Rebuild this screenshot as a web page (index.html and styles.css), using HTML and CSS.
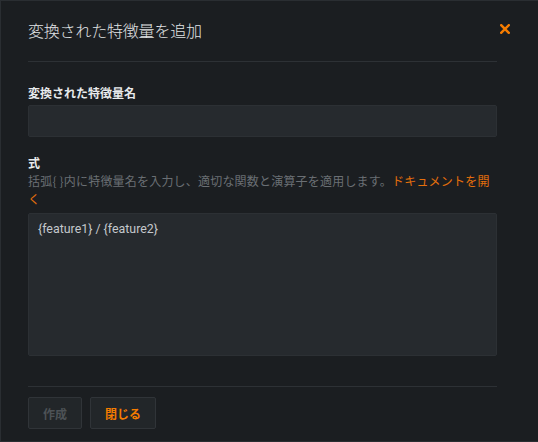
FILE: index.html
```html
<!DOCTYPE html>
<html lang="ja">
<head>
<meta charset="utf-8">
<title>変換された特徴量を追加</title>
<link rel="stylesheet" href="styles.css">
</head>
<body>
<div class="dialog">
  <div class="header">
    <h1 class="title">変換された特徴量を追加</h1>
    <button class="close" aria-label="閉じる">
      <svg width="10" height="10" viewBox="0 0 10 10"><path d="M1.2 1.2 L8.8 8.8 M8.8 1.2 L1.2 8.8" stroke="#f57c00" stroke-width="2.4" stroke-linecap="square" fill="none"/></svg>
    </button>
  </div>
  <div class="content">
    <hr class="divider">
    <div class="form">
      <label class="label">変換された特徴量名</label>
      <div class="input"></div>
      <label class="label label-expr">式</label>
      <p class="help"><span class="help-text">括弧{ }内に特徴量名を入力し、適切な関数と演算子を適用します。</span><span class="link">ドキュメントを開く</span></p>
      <div class="textarea">{feature1} / {feature2}</div>
    </div>
    <hr class="divider">
    <div class="footer">
      <button class="btn btn-disabled">作成</button>
      <button class="btn btn-primary">閉じる</button>
    </div>
  </div>
</div>
</body>
</html>
```
FILE: styles.css
```css
html, body {
  margin: 0;
  padding: 0;
  background: #1b1e21;
  overflow: hidden;
}
body {
  font-family: "Noto Sans CJK JP", Roboto, sans-serif;
  color: #e4e6e8;
}
.dialog {
  box-sizing: border-box;
  width: 538px;
  height: 442px;
  border: 1px solid #2a2e32;
  border-right: none;
  background: #1b1e21;
  padding: 0 28px 0 27px;
}
.header {
  display: flex;
  align-items: center;
  justify-content: space-between;
  height: 57px;
  padding-bottom: 3px;
}
.title {
  margin: 0;
  font-size: 16px;
  font-weight: 300;
  line-height: 24px;
  color: #e2e4e6;
  letter-spacing: -0.2px;
}
.close {
  background: none;
  border: none;
  padding: 0;
  width: 10px;
  height: 10px;
  display: flex;
  margin-bottom: 1px;
}
.content {
  margin-right: 13px;
}
.divider {
  margin: 0;
  border: none;
  border-top: 1px solid #2d3135;
  height: 0;
}
.form {
  display: flex;
  flex-direction: column;
  padding-top: 22px;
}
.label {
  font-size: 12px;
  font-weight: 700;
  line-height: 18px;
  color: #e8eaec;
}
.input {
  box-sizing: border-box;
  height: 32px;
  margin-top: 3px;
  background: #262a2e;
  border: 1px solid #2c3034;
  border-radius: 2px;
}
.label-expr {
  margin-top: 17px;
}
.help {
  margin: 0;
  font-size: 12px;
  line-height: 18px;
  letter-spacing: 0.2px;
}
.help-text {
  color: #6a6f74;
}
.link {
  color: #e46f0c;
}
.textarea {
  box-sizing: border-box;
  height: 143px;
  margin-top: 5px;
  background: #262a2e;
  border: 1px solid #2c3034;
  border-radius: 2px;
  padding: 6px 9px;
  font-family: Roboto, "Noto Sans CJK JP", sans-serif;
  font-size: 12.4px;
  line-height: 18px;
  color: #c4c8cc;
}
.form + .divider {
  margin-top: 30px;
}
.footer {
  display: flex;
  gap: 8px;
  padding-top: 10px;
}
.btn {
  box-sizing: border-box;
  height: 32px;
  padding: 0 14px;
  background: #222629;
  border: 1px solid #303438;
  border-radius: 2px;
  font-family: "Noto Sans CJK JP", sans-serif;
  font-size: 12px;
  font-weight: 700;
}
.btn-disabled {
  color: #4d5256;
}
.btn-primary {
  color: #f57c00;
}
```
